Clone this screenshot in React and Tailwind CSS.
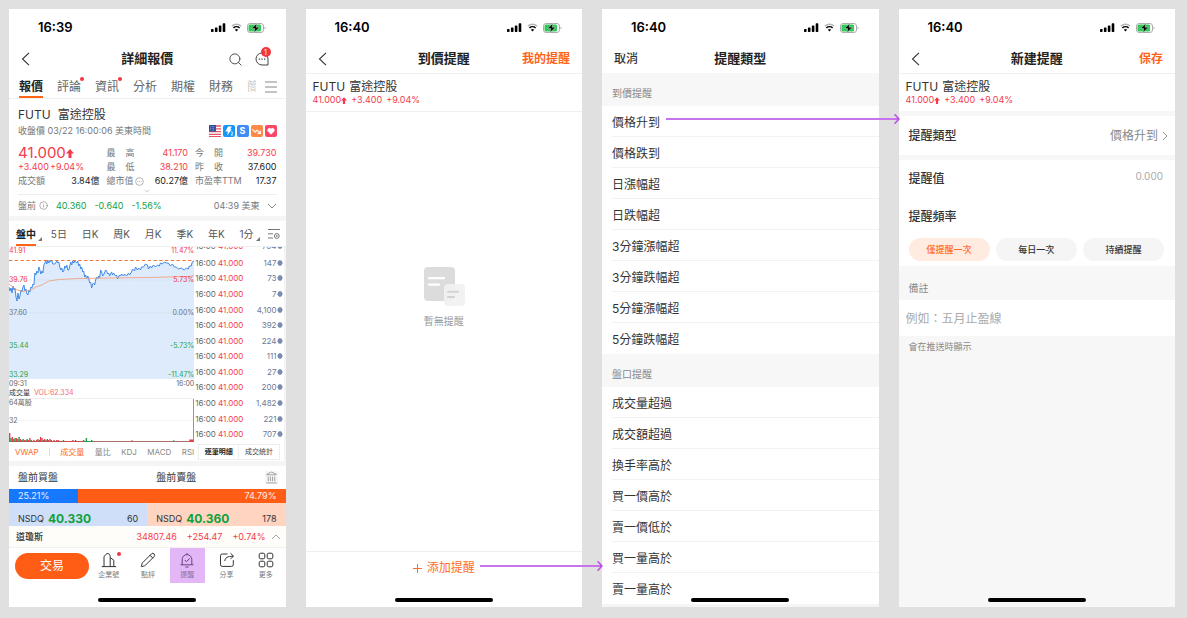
import React, { useState } from "react";
import { Heart, Info, Landmark, Pencil, Search, TrendingDown } from "lucide-react";

const quoteTabs = [
  { label: "報價", active: true },
  { label: "評論", dot: true },
  { label: "資訊", dot: true },
  { label: "分析" },
  { label: "期權" },
  { label: "財務" },
];

const periods = ["5日", "日K", "周K", "月K", "季K", "年K", "1分"];

const ticks = ["147", "73", "7", "4,100", "392", "224", "111", "27", "200", "1,482", "221", "707"];

const chartLevels = [
  { price: "41.91", change: "11.47%", color: "text-[#f0394a]", space: "" },
  { price: "39.76", change: "5.73%", color: "text-[#f0394a]", space: "mt-[21px]" },
  { price: "37.60", change: "0.00%", color: "text-[#6b7385]", space: "mt-[25px]" },
  { price: "35.44", change: "-5.73%", color: "text-[#1ea54c]", space: "mt-[25px]" },
  { price: "33.29", change: "-11.47%", color: "text-[#1ea54c]", space: "mt-[21px]" },
];

const pricePoints =
  "0,40 1,44 2,41 3,46 4,39 5,43 6,41 7,50 8,54 9,46 10,52 11,49 12,43 13,45 14,40 15,38 16,44 17,42 18,47 19,48 20,43 21,45 22,40 23,41 24,37 25,38 26,26 27,28 28,24 29,26 30,20 31,23 32,27 33,24 34,26 35,18 36,16 37,14 38,17 39,13 40,16 41,14 43,14 44,17 46,17 48,14 49,16 50,15 51,20 52,23 53,21 54,25 55,24 56,19 57,21 58,18 59,23 60,23 61,19 62,15 63,18 64,14 65,16 66,14 68,16 69,14 70,19 71,17 72,22 73,20 74,25 75,24 76,30 77,28 78,32 79,29 80,31 81,36 82,35 83,41 84,37 85,36 86,38 87,33 88,30 89,32 90,29 91,31 92,23 93,25 94,29 95,28 97,23 98,24 99,27 100,26 101,29 103,25 104,28 105,26 107,29 108,28 109,32 111,28 112,29 113,27 115,29 116,27 118,29 120,26 121,28 123,25 124,22 126,24 127,20 129,23 130,21 132,23 133,20 135,20 137,17 139,18 140,22 142,19 143,21 145,18 147,20 149,18 151,19 152,16 154,17 156,15 158,16 160,16 162,19 164,17 166,20 168,20 170,22 173,21 176,23 178,21 180,22 181,19 183,19 184,15 186,14";

const priceAlerts = ["價格升到", "價格跌到", "日漲幅超", "日跌幅超", "3分鐘漲幅超", "3分鐘跌幅超", "5分鐘漲幅超", "5分鐘跌幅超"];
const orderAlerts = ["成交量超過", "成交額超過", "換手率高於", "買一價高於", "賣一價低於", "買一量高於", "賣一量高於"];

const volumes = [9, 4, 5, 3, 4, 4, 3, 5, 3, 2, 3, 2, 2, 3, 2, 4, 2, 1, 2, 1, 2, 3, 2, 5, 4, 2, 3, 2, 3, 2, 3, 2, 1, 2, 1, 2, 2, 1, 1, 1, 2, 1, 1, 1, 1, 1, 1, 2, 1, 2, 1, 1, 1, 1, 1, 2, 1, 4, 1, 1, 1, 2];

const StatusBar = ({ time }) => (
  <div className="flex h-9 shrink-0 items-center justify-between pt-px pr-[20px] pl-[29px] text-black">
    <span className="text-[13px] font-semibold">{time}</span>
    <div className="flex items-center gap-[5px]">
      <svg width="15" height="9" viewBox="0 0 15 9" fill="currentColor">
        <rect x="0" y="6" width="2.6" height="3" rx="0.7" />
        <rect x="3.9" y="4.4" width="2.6" height="4.6" rx="0.7" />
        <rect x="7.8" y="2.4" width="2.6" height="6.6" rx="0.7" />
        <rect x="11.7" y="0.2" width="2.6" height="8.8" rx="0.7" />
      </svg>
      <svg width="11" height="9" viewBox="0 0 11 9" fill="none" stroke="currentColor">
        <path d="M.8 3.2a6.8 6.8 0 0 1 9.4 0" stroke="#b5b5b5" strokeWidth="1.4" />
        <path d="M2.4 5a4.5 4.5 0 0 1 6.2 0" strokeWidth="1.5" />
        <path d="M5.5 8.4 3.9 6.7a2.3 2.3 0 0 1 3.2 0z" fill="currentColor" stroke="none" />
      </svg>
      <svg width="19" height="10" viewBox="0 0 19 10">
        <rect x="0.5" y="0.5" width="16" height="9" rx="2.6" fill="#fff" stroke="#aaa" />
        <rect x="1.5" y="1.5" width="12.6" height="7" rx="1.5" fill="#31c759" />
        <path d="M17.6 3.4v3.2c1.3-.6 1.3-2.6 0-3.2z" fill="#aaa" />
        <path d="M9.8.4 4.6 5.6h3.2L7 9.6l5.4-5.4H9.1z" fill="#000" stroke="#fff" strokeWidth="0.4" />
      </svg>
    </div>
  </div>
);

const HomeBar = () => (
  <div className="absolute bottom-[5px] left-1/2 h-1 w-[98px] -translate-x-1/2 rounded-full bg-black" />
);

const Screen = ({ time, className = "bg-white", children }) => (
  <section className={`relative flex min-w-0 flex-col ${className}`}>
    <div className="bg-white">
      <StatusBar time={time} />
    </div>
    {children}
    <HomeBar />
  </section>
);

const BackButton = () => (
  <button type="button" aria-label="返回" className="flex">
    <svg width="9" height="14" viewBox="0 0 9 14" fill="none" stroke="#333" strokeWidth="1.1">
      <path d="M8 .8 1.5 7 8 13.2" />
    </svg>
  </button>
);

const TitleBar = ({ left, title, right }) => (
  <header className="grid h-7 shrink-0 grid-cols-[1fr_auto_1fr] items-center bg-white px-3">
    <div className="flex">{left}</div>
    <h1 className="text-[13px] font-bold text-[#222]">{title}</h1>
    <div className="flex justify-end">{right}</div>
  </header>
);

const UpArrow = ({ className }) => (
  <svg viewBox="0 0 8 9" fill="currentColor" className={className}>
    <path d="M4 0 8 4.6H5.5V9h-3V4.6H0z" />
  </svg>
);

const Chevron = ({ direction = "down", className = "" }) => {
  const paths = { down: "M1 3l4 4 4-4", up: "M1 7l4-4 4 4", right: "M3 1l4 4-4 4" };
  return (
    <svg width="10" height="10" viewBox="0 0 10 10" fill="none" stroke="currentColor" strokeWidth="0.9" className={className}>
      <path d={paths[direction]} />
    </svg>
  );
};

const StockSummary = () => (
  <div className="h-[38px] border-t border-[#f0f0f0] bg-white px-[7px] pt-[5px]">
    <p className="flex gap-1 text-[12px] leading-4 text-[#333]">
      <span>FUTU</span>
      <span>富途控股</span>
    </p>
    <p className="flex items-center gap-1 text-[9px] leading-[10px] text-[#f43b4b]">
      <span className="flex items-center">
        41.000
        <UpArrow className="h-[7px] w-[6px]" />
      </span>
      <span>+3.400</span>
      <span>+9.04%</span>
    </p>
  </div>
);

const FlowArrow = ({ className }) => (
  <div className={`pointer-events-none absolute z-10 flex h-3 items-center text-[#b84fe6] ${className}`}>
    <span className="h-[2px] flex-1 bg-[#c673ec]" />
    <svg width="6" height="12" viewBox="0 0 6 12" fill="none" stroke="currentColor" strokeWidth="1.6" strokeLinecap="round">
      <path d="M0 6h5M1 1.8 5 6 1 10.2" />
    </svg>
  </div>
);

const Stat = ({ label, value, color = "text-[#222]" }) => (
  <div className="flex h-[14px] items-center justify-between">
    <dt className="flex items-center gap-px text-[#777]">{label}</dt>
    <dd className={color}>{value}</dd>
  </div>
);

const Spread = ({ text }) => (
  <span className="flex w-7 justify-between">
    {text.split("").map((char) => (
      <span key={char}>{char}</span>
    ))}
  </span>
);

const StockInfo = () => (
  <div className="px-[9px] pt-2">
    <h2 className="flex gap-[7px] text-[12px] leading-4 text-[#333]">
      <span>FUTU</span>
      <span>富途控股</span>
    </h2>
    <div className="flex h-4 items-center justify-between">
      <p className="text-[9px] text-[#777]">收盤價 03/22 16:00:06 美東時間</p>
      <div className="flex gap-[2px]">
        <svg width="12" height="12" viewBox="0 0 12 12">
          <rect width="12" height="12" rx="1" fill="#fff" />
          <path d="M0 1h12M0 3.8h12M0 6.6h12M0 9.4h12M0 11.6h12" stroke="#e25563" strokeWidth="1.3" />
          <rect width="7" height="6.6" fill="#2b4a9b" />
          <path d="M1.2 1.6h5M1.2 3.3h5M1.2 5h5" stroke="#fff" strokeWidth="0.6" strokeDasharray="0.7 0.9" />
        </svg>
        <svg width="12" height="12" viewBox="0 0 12 12">
          <rect width="12" height="12" rx="2" fill="#1697f5" />
          <path d="M5 1.4h3.8L7.2 4.6h1.6L4 10.4l1-3.8H2.4z" fill="#fff" />
          <path d="M8 7.4c.6-.8 2-.4 1.8.5-.1.7-1.2 1-1.8 2.1h2.2" stroke="#fff" strokeWidth="0.8" fill="none" />
        </svg>
        <span className="flex size-3 items-center justify-center rounded-[2px] bg-[#3e8cf5] text-[9px] font-bold text-white">S</span>
        <span className="flex size-3 items-center justify-center rounded-[2px] bg-[#ff8a45] text-white">
          <TrendingDown size={9} strokeWidth={3} />
        </span>
        <span className="flex size-3 items-center justify-center rounded-[2px] bg-[#fb4668] text-white">
          <Heart size={8} fill="currentColor" />
        </span>
      </div>
    </div>
    <div className="grid grid-cols-3 gap-x-[7px] pt-[7px] text-[9px] leading-[14px]">
      <dl>
        <div className="flex h-[14px] items-center text-[15px] text-[#f43b4b]">
          41.000
          <UpArrow className="h-[9px] w-[8px]" />
        </div>
        <div className="flex h-[14px] gap-px text-[#f43b4b]">
          <span>+3.400</span>
          <span>+9.04%</span>
        </div>
        <Stat label="成交額" value="3.84億" />
      </dl>
      <dl>
        <Stat label={<Spread text="最高" />} value="41.170" color="text-[#f43b4b]" />
        <Stat label={<Spread text="最低" />} value="38.210" color="text-[#f43b4b]" />
        <Stat
          label={
            <>
              總市值
              <svg width="9" height="9" viewBox="0 0 10 10" fill="none" stroke="#999" strokeWidth="0.8">
                <circle cx="5" cy="5" r="4.3" />
                <path d="M2.6 5h5" strokeDasharray="1 0.9" />
              </svg>
            </>
          }
          value="60.27億"
        />
      </dl>
      <dl>
        <Stat label={<Spread text="今開" />} value="39.730" color="text-[#f43b4b]" />
        <Stat label={<Spread text="昨收" />} value="37.600" />
        <Stat label="市盈率TTM" value="17.37" />
      </dl>
    </div>
    <div className="flex h-[6px] items-center justify-center text-[#999]">
      <Chevron className="size-[6px]" />
    </div>
    <div className="flex h-[22px] items-center border-t border-[#eee] text-[9px] text-[#777]">
      <span>盤前</span>
      <Info size={9} strokeWidth={1.5} className="ml-[3px]" />
      <span className="ml-2 flex gap-2 text-[#13a13f]">
        <span>40.360</span>
        <span>-0.640</span>
        <span>-1.56%</span>
      </span>
      <span className="mr-[7px] ml-auto">04:39 美東</span>
      <Chevron />
    </div>
  </div>
);

const PriceChart = () => (
  <div className="w-[67%] shrink-0">
    <div className="relative h-[132px]">
      <svg viewBox="0 0 186 132" preserveAspectRatio="none" className="absolute size-full">
        <polygon points={`0,132 ${pricePoints} 186,132`} fill="#deebfc" />
        <path d="M0 33h186M0 66h186" stroke="#cfd9ea" strokeWidth="0.6" strokeDasharray="3 1" />
        <path d="M0 13.5h186" stroke="#ef7437" strokeWidth="1" strokeDasharray="3.4 2.4" />
        <polyline points={pricePoints} fill="none" stroke="#3f8ae8" strokeWidth="1" strokeLinejoin="round" />
        <path
          d="M0 37 4 40 8 43 14 44.5 22 43 27 40 33 38 40 34 50 32.5 70 31.5 100 31 140 30.5 180 29.5 184 29 186 27"
          fill="none"
          stroke="#f2a27e"
          strokeWidth="0.9"
        />
      </svg>
      <div className="absolute inset-x-0 top-0 text-[7px] leading-[8px]">
        {chartLevels.map((level) => (
          <div key={level.price} className={`flex justify-between ${level.color} ${level.space}`}>
            <span>{level.price}</span>
            <span>{level.change}</span>
          </div>
        ))}
      </div>
    </div>
    <div className="flex justify-between text-[7px] leading-[10px] text-[#666]">
      <span>09:31</span>
      <span>16:00</span>
    </div>
    <div className="flex h-[10px] items-center gap-1 border-b border-[#eee] text-[7px] text-[#f5686f]">
      <span className="text-[#333]">成交量</span>
      <span>VOL:62.334</span>
    </div>
    <div className="relative h-[43px]">
      <svg viewBox="0 0 186 43" preserveAspectRatio="none" className="absolute size-full">
        <path d="M0 21.5h186" stroke="#eee" strokeWidth="0.6" />
        <path d="M0 42.6h186" stroke="#8c3a32" strokeWidth="0.8" />
        {volumes.map((value, i) => (
          <rect key={i} x={i * 1.35} y={43 - value} width="1.4" height={value} fill={i % 3 === 1 || i > 55 ? "#1e9e4c" : "#e5404b"} />
        ))}
        <rect x="123" y="41" width="1" height="2" fill="#e5404b" />
        <rect x="165" y="41" width="1" height="2" fill="#1e9e4c" />
        <rect x="181" y="40.5" width="4" height="2.5" fill="#e5404b" />
        <rect x="185" y="0" width="1" height="43" fill="#e5404b" />
      </svg>
      <div className="absolute inset-x-0 top-0 flex flex-col gap-[10px] text-[7px] leading-[8px] text-[#666]">
        <span>64萬股</span>
        <span>32</span>
      </div>
    </div>
    <div className="flex h-[19px] items-center justify-between pl-[6px] text-[8px] whitespace-nowrap text-[#888]">
      <span className="text-[#ff6a1f]">VWAP</span>
      <span className="h-2 w-px bg-[#ddd]" />
      <span className="text-[#ff6a1f]">成交量</span>
      <span>量比</span>
      <span>KDJ</span>
      <span>MACD</span>
      <span>RSI</span>
    </div>
  </div>
);

const TickRow = ({ volume }) => (
  <div className="flex flex-1 items-center text-[8px] leading-none">
    <span className="text-[#666]">16:00</span>
    <span className="ml-[2px] text-[#f43b4b]">41.000</span>
    <span className="ml-auto text-[#6b7a99]">{volume}</span>
    <svg width="6" height="6" viewBox="0 0 6 6" fill="#7c8cb0">
      <path d="M3 0 5 1v1l1 1-1 1v1L3 6 1 5V4L0 3l1-1V1z" />
    </svg>
  </div>
);

const TickList = () => (
  <div className="flex min-w-0 flex-1 flex-col border-r-2 border-[#f4f4f4] pr-px pl-px">
    <div className="flex h-[3px] items-end overflow-hidden">
      <TickRow volume="704" />
    </div>
    <div className="flex flex-1 flex-col pt-[5px]">
      {ticks.map((volume) => (
        <TickRow key={volume} volume={volume} />
      ))}
    </div>
    <div className="flex h-[19px] items-center justify-center px-[3px] text-[7px] leading-[14px] text-[#444]">
      <button type="button" className="flex-1 border border-[#eee] font-bold whitespace-nowrap text-[#222]">逐筆明細</button>
      <button type="button" className="flex-1 border border-l-0 border-[#eee] whitespace-nowrap">成交統計</button>
    </div>
  </div>
);

const NavItem = ({ label, highlight, children }) => (
  <div className="flex flex-1 justify-center">
    <button
      type="button"
      className={`flex h-[35px] w-[35px] flex-col items-center pt-1 text-[7px] leading-[10px] whitespace-nowrap ${
        highlight ? "bg-[#e3b6f7] text-[#8d7199]" : "text-[#777]"
      }`}
    >
      <span className="relative mb-[2px] flex h-4 items-center text-[#333]">{children}</span>
      {label}
    </button>
  </div>
);

const iconProps = { width: 16, height: 16, viewBox: "0 0 16 16", fill: "none", stroke: "currentColor", strokeWidth: 1 };

const BottomNav = () => (
  <nav className="flex items-center pl-[6px]">
    <button type="button" className="h-[26px] w-[74px] rounded-full bg-[#ff5c16] text-[12px] text-white">
      交易
    </button>
    <div className="flex flex-1">
      <NavItem label="企業號">
        <svg {...iconProps}>
          <path d="M.8 14.6h14.4M3 14.6V4.4L6 1.5c1.8 0 3.2 1 3.2 2.9v10.2M9.2 5.6l3.6 2.6v6.4" />
        </svg>
        <span className="absolute top-0 -right-1 size-1 rounded-full bg-[#f5353d]" />
      </NavItem>
      <NavItem label="點評">
        <Pencil size={16} strokeWidth={1.5} />
      </NavItem>
      <NavItem label="提醒" highlight>
        <svg {...iconProps} stroke="#65487a">
          <path d="M1.5 12.8h13M3.2 12.8V7.4a4.8 4.8 0 0 1 9.6 0v5.4M8 2.6V1M6.4 15h3.2M5.8 8l1.7 1.8 3.1-3.4" />
        </svg>
      </NavItem>
      <NavItem label="分享">
        <svg {...iconProps}>
          <path d="M8.5 2H3.2A1.7 1.7 0 0 0 1.5 3.7v9a1.7 1.7 0 0 0 1.7 1.7h9.4a1.7 1.7 0 0 0 1.7-1.7V8.2M5.8 9c.2-3.2 2.7-4.8 8.4-4.8M11.5 1.2l3.1 3-3.1 2.6" />
        </svg>
      </NavItem>
      <NavItem label="更多">
        <svg {...iconProps}>
          <rect x="1.2" y="1.2" width="5.6" height="5.6" rx="1.6" />
          <rect x="9.2" y="1.2" width="5.6" height="5.6" rx="1.6" />
          <rect x="1.2" y="9.2" width="5.6" height="5.6" rx="1.6" />
          <rect x="9.2" y="9.2" width="5.6" height="5.6" rx="1.6" />
        </svg>
      </NavItem>
    </div>
  </nav>
);

const QuoteScreen = () => (
  <Screen time="16:39">
    <TitleBar
      left={<BackButton />}
      title="詳細報價"
      right={
        <div className="flex items-center gap-3 pr-[5px] text-[#444]">
          <button type="button" aria-label="搜尋">
            <Search size={15} strokeWidth={1.5} />
          </button>
          <button type="button" aria-label="訊息" className="relative">
            <svg width="14" height="14" viewBox="0 0 14 14" fill="none" stroke="currentColor">
              <path d="M13 13H7A6 6 0 1 1 13 7z" />
              <path d="M3.8 7.2h6.6" strokeWidth="1.3" strokeDasharray="1.3 1.3" />
            </svg>
            <span className="absolute -top-[5px] left-[6px] flex size-[10px] items-center justify-center rounded-full bg-[#f5353d] text-[7px] leading-none text-white">
              1
            </span>
          </button>
        </div>
      }
    />
    <div className="flex h-[26px] items-stretch gap-[14px] border-b border-[#f0f0f0] pr-2 pl-[10px] text-[12px] text-[#666]">
      {quoteTabs.map((tab) => (
        <button
          key={tab.label}
          type="button"
          className={`relative shrink-0 border-b-2 pt-[5px] ${tab.active ? "border-[#ff6418] font-bold text-[#222]" : "border-transparent"}`}
        >
          {tab.label}
          {tab.dot && <span className="absolute top-1 -right-[3px] size-1 rounded-full bg-[#f5353d]" />}
        </button>
      ))}
      <span className="w-[9px] shrink-0 overflow-hidden pt-[5px] leading-[18px] text-[#ccc]">簡</span>
      <button type="button" aria-label="更多分頁" className="-ml-[5px] flex items-center pt-[3px] text-[#888]">
        <svg width="12" height="12" viewBox="0 0 12 12" stroke="currentColor">
          <path d="M0 1h12M0 6h12M0 11h12" />
        </svg>
      </button>
    </div>
    <StockInfo />
    <div className="h-[5px] bg-[#f5f5f5]" />
    <div className="flex h-[26px] items-center justify-between border-b border-[#eee] pr-[5px] pl-[7px] text-[10px] text-[#555]">
      <button type="button" className="relative h-full border-b-2 border-[#ff6418] pt-[3px] font-bold text-[#222]">
        盤中
        <span className="absolute -right-[6px] bottom-[3px] border-b-4 border-l-4 border-b-[#777] border-l-transparent" />
      </button>
      {periods.map((period) => (
        <button key={period} type="button" className="relative h-full border-b-2 border-transparent pt-[3px]">
          {period}
          {period === "1分" && (
            <span className="absolute -right-[6px] bottom-[3px] border-b-4 border-l-4 border-b-[#777] border-l-transparent" />
          )}
        </button>
      ))}
      <button type="button" aria-label="圖表設定" className="text-[#666]">
        <svg width="12" height="12" viewBox="0 0 12 12" fill="none" stroke="currentColor" strokeWidth="0.9">
          <path d="M0 1.5h12M0 5.8h5M0 10h5" />
          <circle cx="8.8" cy="8" r="2.4" />
          <circle cx="8.8" cy="8" r="0.5" />
        </svg>
      </button>
    </div>
    <div className="flex">
      <PriceChart />
      <TickList />
    </div>
    <div className="h-[5px] bg-[#f5f5f5]" />
    <div className="grid h-[23px] grid-cols-2 items-center text-[10px] text-[#333]">
      <span className="pl-[9px]">盤前買盤</span>
      <div className="flex items-center justify-between pr-2 pl-[9px]">
        盤前賣盤
        <span className="bg-[#f6f6f6] text-[#888]">
          <Landmark size={13} strokeWidth={1.4} />
        </span>
      </div>
    </div>
    <div className="flex h-[14px] items-center text-[9px] leading-[14px] text-white/90">
      <span className="w-1/4 bg-[#1677ff] pl-[9px]">25.21%</span>
      <span className="flex-1 bg-[#ff5c16] pr-[9px] text-right">74.79%</span>
    </div>
    <div className="grid h-[23px] grid-cols-2 text-[9px] text-[#333]">
      <div className="flex items-center gap-1 bg-[#cfdff9] px-[9px] pt-[7px]">
        NSDQ <strong className="text-[12px] font-bold text-[#0fa13c]">40.330</strong>
        <span className="ml-auto">60</span>
      </div>
      <div className="flex items-center gap-1 bg-[#ffd5c1] px-[9px] pt-[7px]">
        NSDQ <strong className="text-[12px] font-bold text-[#0fa13c]">40.360</strong>
        <span className="ml-auto">178</span>
      </div>
    </div>
    <div className="flex h-[22px] items-center border-b border-[#f0f0f0] bg-[#fffdfa] pr-[5px] pl-[7px] text-[9px] text-[#f43b4b]">
      <span className="font-medium text-[#333]">道瓊斯</span>
      <span className="mr-[5px] ml-auto flex gap-[10px]">
        <span>34807.46</span>
        <span>+254.47</span>
        <span>+0.74%</span>
      </span>
      <Chevron direction="up" className="text-[#999]" />
    </div>
    <BottomNav />
  </Screen>
);

const EmptyScreen = () => (
  <Screen time="16:40">
    <TitleBar
      left={<BackButton />}
      title="到價提醒"
      right={<a href="#alerts" className="text-[12px] font-bold text-[#ff6418]">我的提醒</a>}
    />
    <StockSummary />
    <div className="flex flex-1 flex-col items-center border-t border-[#f0f0f0] pt-[155px]">
      <svg width="42" height="42" viewBox="0 0 42 42">
        <rect x="1" y="0" width="31" height="34" rx="4" fill="#dcdcdc" />
        <path d="M6 11.2h15M6 17.6h10" stroke="#fff" strokeWidth="2.2" strokeLinecap="round" />
        <rect x="21" y="17" width="21" height="22" rx="4" fill="#f1f1f1" fillOpacity="0.93" />
        <path d="M25 24.8h10M25 30h6" stroke="#d2d2d2" strokeWidth="2" strokeLinecap="round" />
      </svg>
      <p className="mt-[5px] text-[10px] text-[#999]">暫無提醒</p>
    </div>
    <div className="relative flex h-14 items-start justify-center border-t border-[#eee] pt-[7px]">
      <button type="button" className="flex items-center gap-[5px] text-[12px] leading-[18px] text-[#ff6c28]">
        <svg width="9" height="9" viewBox="0 0 9 9" stroke="currentColor">
          <path d="M4.5 0v9M0 4.5h9" />
        </svg>
        添加提醒
      </button>
      <FlowArrow className="top-[8px] -right-[21px] left-[calc(50%+36px)]" />
    </div>
  </Screen>
);

const AlertGroup = ({ title, items }) => (
  <>
    <h2 className="h-[33px] bg-[#f7f7f7] pt-[13px] pl-[10px] text-[10px] leading-[15px] text-[#888]">{title}</h2>
    <ul className="bg-white pl-[10px]">
      {items.map((item) => (
        <li key={item} className="relative h-[31px] border-b border-[#f2f2f2] last:border-transparent">
          <button type="button" className="size-full pt-[3px] text-left text-[12px] text-[#333]">{item}</button>
          {item === "價格升到" && <FlowArrow className="top-[7px] -right-[21px] left-[54px]" />}
        </li>
      ))}
    </ul>
  </>
);

const TypeScreen = () => (
  <Screen time="16:40" className="bg-[#f5f5f5]">
    <TitleBar
      left={<button type="button" className="text-[12px] font-medium text-[#333]">取消</button>}
      title="提醒類型"
    />
    <AlertGroup title="到價提醒" items={priceAlerts} />
    <AlertGroup title="盤口提醒" items={orderAlerts} />
  </Screen>
);

const NewAlertScreen = () => {
  const [frequency, setFrequency] = useState("僅提醒一次");

  return (
    <Screen time="16:40" className="bg-[#f7f7f7]">
      <TitleBar
        left={<BackButton />}
        title="新建提醒"
        right={<button type="button" className="text-[12px] font-bold text-[#ff6418]">保存</button>}
      />
      <StockSummary />
      <button type="button" className="mt-[5px] flex h-[39px] items-center justify-between bg-white pr-[5px] pl-[10px] text-[12px] text-[#333]">
        <span className="font-medium">提醒類型</span>
        <span className="flex items-center gap-[2px] text-[#888]">
          價格升到
          <Chevron direction="right" />
        </span>
      </button>
      <form className="mt-[5px] bg-white px-[10px] pt-[10px] pb-[5px]">
        <div className="flex justify-between pr-[2px]">
          <label htmlFor="alert-value" className="text-[12px] leading-[18px] font-medium text-[#333]">提醒值</label>
          <input
            id="alert-value"
            type="text"
            placeholder="0.000"
            className="h-3 w-20 text-right text-[10px] placeholder:text-[#aaa] focus:outline-none"
          />
        </div>
        <fieldset className="mt-5">
          <legend className="text-[12px] leading-[18px] font-medium text-[#333]">提醒頻率</legend>
          <div className="mt-3 grid grid-cols-3 gap-[6px] pr-px">
            {["僅提醒一次", "每日一次", "持續提醒"].map((option) => (
              <label
                key={option}
                className="flex h-[23px] cursor-pointer items-center justify-center rounded-full bg-[#f5f5f5] text-[9px] font-medium text-[#333] has-checked:bg-[#ffebe0] has-checked:text-[#ff6c28]"
              >
                <input
                  type="radio"
                  name="frequency"
                  className="sr-only"
                  checked={frequency === option}
                  onChange={() => setFrequency(option)}
                />
                {option}
              </label>
            ))}
          </div>
        </fieldset>
      </form>
      <label htmlFor="alert-note" className="h-[34px] pt-[15px] pl-[10px] text-[10px] leading-[15px] text-[#888]">備註</label>
      <input
        id="alert-note"
        type="text"
        placeholder="例如：五月止盈線"
        className="h-9 w-full bg-white px-[7px] text-[12px] placeholder:text-[#aaa] focus:outline-none"
      />
      <p className="pt-1 pl-[10px] text-[9px] leading-[13px] text-[#888]">會在推送時顯示</p>
    </Screen>
  );
};

const App = () => (
  <main
    lang="zh-Hant"
    className="grid min-h-screen grid-cols-4 gap-5 bg-[#e0e0e0] pt-[9px] pr-3 pb-[11px] pl-[9px] font-['Inter','Noto_Sans_CJK_TC',sans-serif]"
  >
    <QuoteScreen />
    <EmptyScreen />
    <TypeScreen />
    <NewAlertScreen />
  </main>
);

export default App;
